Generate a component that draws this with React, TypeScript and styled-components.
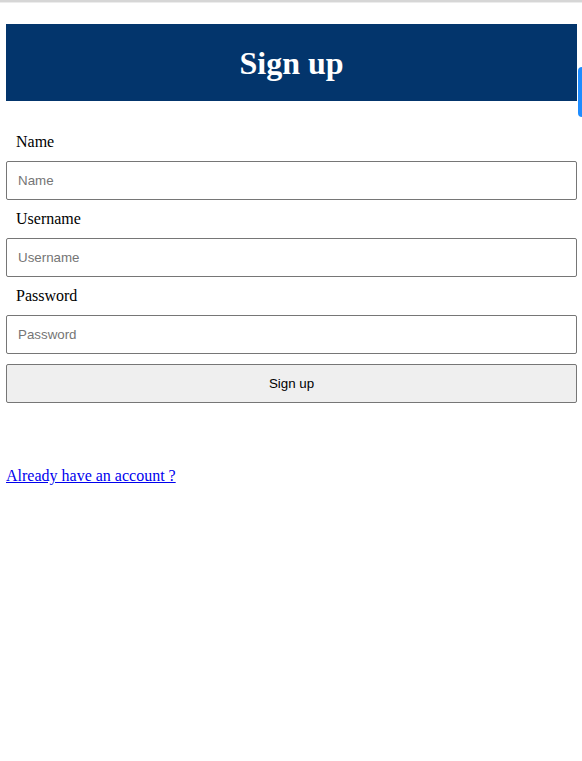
import React from "react";
import styled, { createGlobalStyle } from "styled-components";

const Global = createGlobalStyle`
  html, body { margin: 0; padding: 0; background: #fff; }
  body { font-family: "Liberation Serif", "Times New Roman", serif; font-size: 16px; color: #000; }
`;

const TopBar = styled.div`
  height: 2px;
  background: #d6d6d6;
  border-bottom: 1px solid #ececec;
`;

const Page = styled.div`
  padding: 21px 5px 0 6px;
`;

const Header = styled.header`
  background: #03356c;
  height: 77px;
  display: flex;
  align-items: center;
  justify-content: center;
`;

const Title = styled.h1`
  margin: 0;
  color: #fff;
  font-family: "Liberation Serif", serif;
  font-weight: bold;
  font-size: 32px;
  line-height: 1;
`;

const Form = styled.form`
  display: flex;
  flex-direction: column;
  margin-top: 22px;
`;

const Label = styled.label`
  display: block;
  padding: 9px 10px 10px;
  line-height: 19px;
  font-size: 16px;
  font-family: "Liberation Serif", serif;
`;

const Input = styled.input`
  box-sizing: border-box;
  height: 39px;
  width: 100%;
  margin: 0;
  padding: 0 11px;
  border: 1px solid #767676;
  border-radius: 2px;
  font-family: "Liberation Sans", Arial, sans-serif;
  font-size: 13.33px;
  &::placeholder { color: #757575; }
`;

const Button = styled.button`
  box-sizing: border-box;
  height: 39px;
  width: 100%;
  margin-top: 10px;
  background: #efefef;
  border: 1px solid #767676;
  border-radius: 2px;
  font-family: "Liberation Sans", Arial, sans-serif;
  font-size: 13.33px;
  color: #000;
`;

const LinkRow = styled.p`
  margin: 63px 0 0;
  line-height: 19px;
`;

const Link = styled.a`
  color: #0000ee;
  text-decoration: underline;
  font-family: "Liberation Serif", serif;
  font-size: 16px;
`;

const SideTab = styled.div`
  position: fixed;
  right: 0;
  top: 67px;
  width: 4px;
  height: 50px;
  background: #1e8cff;
  border-radius: 4px 0 0 4px;
`;

export default function App() {
  return (
    <>
      <Global />
      <TopBar />
      <Page>
        <Header>
          <Title>Sign up</Title>
        </Header>
        <Form onSubmit={(e) => e.preventDefault()}>
          <Label htmlFor="name">Name</Label>
          <Input id="name" placeholder="Name" />
          <Label htmlFor="username">Username</Label>
          <Input id="username" placeholder="Username" />
          <Label htmlFor="password">Password</Label>
          <Input id="password" type="password" placeholder="Password" />
          <Button type="submit">Sign up</Button>
        </Form>
        <LinkRow>
          <Link href="#">Already have an account ?</Link>
        </LinkRow>
      </Page>
      <SideTab />
    </>
  );
}
